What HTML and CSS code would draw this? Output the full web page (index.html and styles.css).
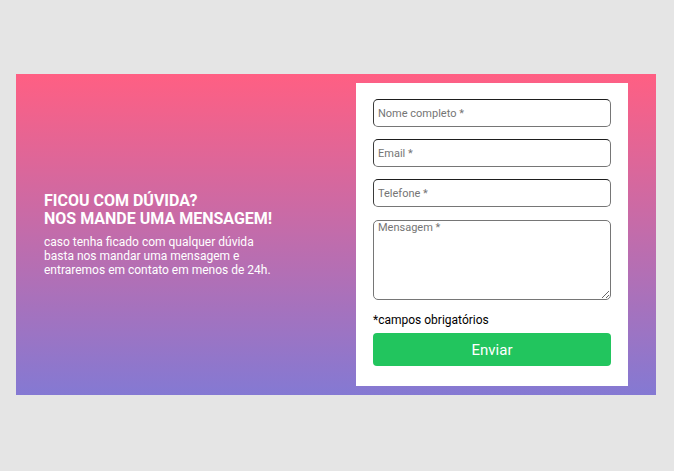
FILE: index.html
```html
<!DOCTYPE html>
<html lang="pt-BR">
<head>
<meta charset="utf-8">
<title>Contato</title>
<link rel="stylesheet" href="styles.css">
</head>
<body>
<section class="banner">
  <div class="intro">
    <h2 class="title">Ficou com dúvida?<br>Nos mande uma mensagem!</h2>
    <p class="text">caso tenha ficado com qualquer dúvida basta nos mandar uma mensagem e entraremos em contato em menos de 24h.</p>
  </div>
  <form class="card">
    <input class="field" type="text" placeholder="Nome completo *">
    <input class="field" type="email" placeholder="Email *">
    <input class="field" type="tel" placeholder="Telefone *">
    <textarea class="field area" placeholder="Mensagem *"></textarea>
    <p class="note">*campos obrigatórios</p>
    <button class="send" type="button">Enviar</button>
  </form>
</section>
</body>
</html>
```
FILE: styles.css
```css
* { box-sizing: border-box; }
html, body { margin: 0; }
body {
  background: #e5e5e5;
  padding: 74px 18px 0 16px;
  font-family: Roboto, "Liberation Sans", sans-serif;
}
.banner {
  width: 640px;
  height: 321px;
  background: linear-gradient(to bottom, #ff5f83 0%, #8479d3 100%);
  display: flex;
  align-items: center;
  justify-content: space-between;
  padding: 0 28px;
}
.intro {
  color: #fff;
  width: 240px;
}
.title {
  margin: 0;
  font-size: 16px;
  font-weight: 700;
  line-height: 18px;
  text-transform: uppercase;
}
.text {
  margin: 7px 0 0;
  font-size: 12px;
  line-height: 14px;
  width: 234px;
}
.card {
  background: #fff;
  width: 272px;
  padding: 16px 17px 20px;
  display: flex;
  flex-direction: column;
}
.field {
  display: block;
  width: 100%;
  height: 28px;
  margin: 0 0 12px;
  padding: 0 4px;
  border: 1px solid #767676;
  border-top-color: #1e1e1e;
  border-left-color: #3a3a3a;
  border-radius: 5px;
  font-family: Roboto, "Liberation Sans", sans-serif;
  font-size: 11px;
  color: #222;
  background: #fff;
}
.field::placeholder { color: #757575; }
.area {
  height: 80px;
  margin-top: 1px;
  padding: 0 4px;
  border-color: #767676;
  resize: vertical;
}
.note {
  margin: 1px 0 0;
  font-size: 12px;
  line-height: 15px;
  color: #000;
}
.send {
  margin-top: 5px;
  height: 33px;
  width: 100%;
  border: 0;
  border-radius: 4px;
  background: #22c55e;
  color: #fff;
  font-family: Roboto, "Liberation Sans", sans-serif;
  font-size: 15px;
}
```
